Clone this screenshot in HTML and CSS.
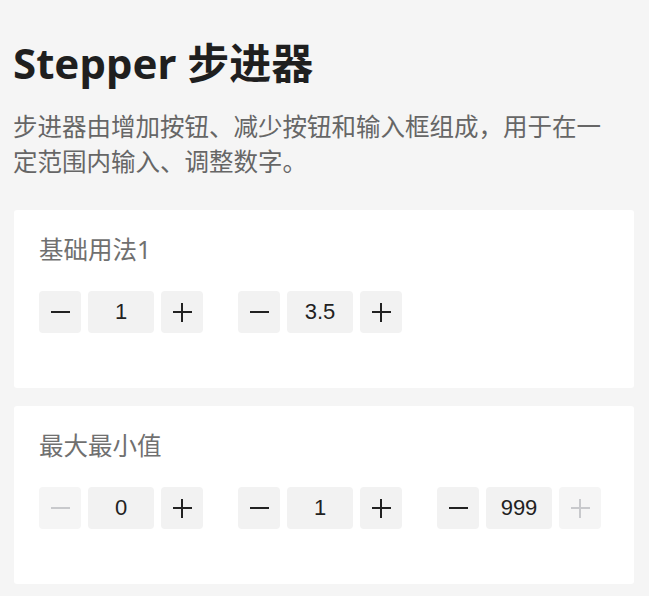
FILE: index.html
```html
<!DOCTYPE html>
<html lang="zh-CN">
<head>
    <meta charset="UTF-8">
    <meta name="viewport" content="width=device-width, initial-scale=1.0">
    <title>Stepper 步进器</title>
    <link rel="stylesheet" href="styles.css">
</head>
<body>
    <h1 class="page-title">Stepper 步进器</h1>
    <p class="page-desc">步进器由增加按钮、减少按钮和输入框组成，用于在一定范围内输入、调整数字。</p>

    <div class="demo-card">
        <h3 class="demo-title">基础用法1</h3>
        <div class="stepper-row">
            <div class="stepper">
                <button class="step-btn minus"></button>
                <input class="step-input" value="1">
                <button class="step-btn plus"></button>
            </div>
            <div class="stepper">
                <button class="step-btn minus"></button>
                <input class="step-input" value="3.5">
                <button class="step-btn plus"></button>
            </div>
        </div>
    </div>

    <div class="demo-card">
        <h3 class="demo-title">最大最小值</h3>
        <div class="stepper-row">
            <div class="stepper">
                <button class="step-btn minus disabled"></button>
                <input class="step-input" value="0">
                <button class="step-btn plus"></button>
            </div>
            <div class="stepper">
                <button class="step-btn minus"></button>
                <input class="step-input" value="1">
                <button class="step-btn plus"></button>
            </div>
            <div class="stepper">
                <button class="step-btn minus"></button>
                <input class="step-input" value="999">
                <button class="step-btn plus disabled"></button>
            </div>
        </div>
    </div>
</body>
</html>
```

FILE: styles.css
```css
body {
    margin: 0;
    padding: 0 15px 0 14px;
    background-color: #f5f5f5;
    font-family: "Noto Sans", "Noto Sans CJK SC", sans-serif;
}
.page-title {
    margin: 35px 0 0 -1px;
    font-size: 42px;
    line-height: 56px;
    font-weight: 700;
    color: #1f1f1f;
}
.page-desc {
    margin: 18px 20px 0 -1px;
    font-size: 24.5px;
    line-height: 35px;
    color: #666;
}
.demo-card {
    margin-top: 31px;
    padding: 24px 25px 55px;
    background-color: #fff;
    border-radius: 3px;
}
.demo-card + .demo-card {
    margin-top: 18px;
}
.demo-title {
    margin: 0;
    font-size: 24.5px;
    line-height: 32px;
    font-weight: 400;
    color: #707070;
}
.stepper-row {
    display: flex;
    gap: 35px;
    margin-top: 25px;
}
.stepper {
    display: flex;
    gap: 7px;
}
.step-btn {
    position: relative;
    width: 42px;
    height: 42px;
    padding: 0;
    border: none;
    border-radius: 4px;
    background-color: #f2f2f2;
}
.step-btn::before,
.plus::after {
    content: "";
    position: absolute;
    top: 50%;
    left: 50%;
    width: 19px;
    height: 2px;
    margin: -1px 0 0 -9.5px;
    background-color: #222;
}
.plus::after {
    width: 2px;
    height: 19px;
    margin: -9.5px 0 0 -1px;
}
.step-btn.disabled {
    background-color: #f5f5f5;
}
.step-btn.disabled::before,
.step-btn.disabled::after {
    background-color: #c8c9cc;
}
.step-input {
    width: 66px;
    height: 42px;
    padding: 0;
    border: none;
    border-radius: 4px;
    background-color: #f2f2f2;
    text-align: center;
    font-family: "Liberation Sans", sans-serif;
    font-size: 22px;
    color: #222;
}
```
